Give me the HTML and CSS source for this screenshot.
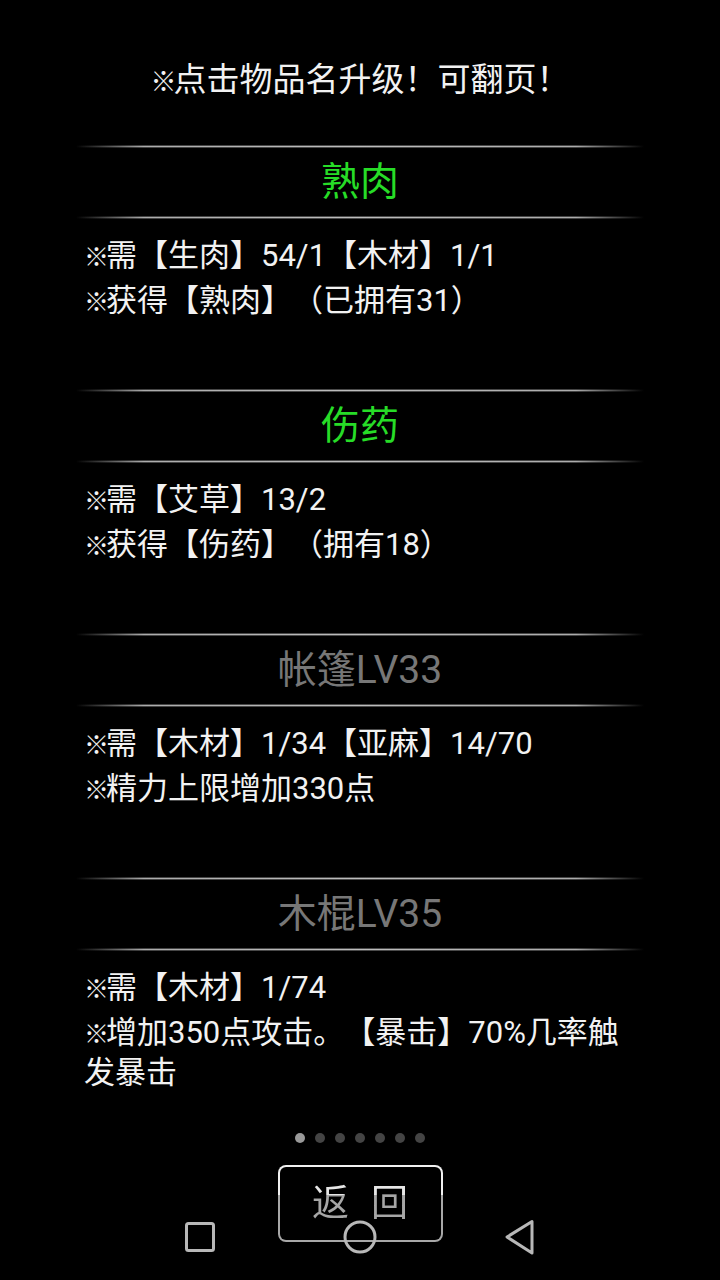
FILE: index.html
```html
<!DOCTYPE html>
<html lang="zh">
<head>
<meta charset="utf-8">
<title>升级</title>
<link rel="stylesheet" href="styles.css">
</head>
<body>
<div class="page">
  <div class="header"><span class="mark">※</span>点击物品名升级！可翻页！</div>

  <section class="item">
    <div class="sep"></div>
    <div class="title green">熟肉</div>
    <div class="sep"></div>
    <div class="desc">
      <p><span class="mark">※</span>需【生肉】54/1【木材】1/1</p>
      <p><span class="mark">※</span>获得【熟肉】（已拥有31）</p>
    </div>
  </section>

  <section class="item">
    <div class="sep"></div>
    <div class="title green">伤药</div>
    <div class="sep"></div>
    <div class="desc">
      <p><span class="mark">※</span>需【艾草】13/2</p>
      <p><span class="mark">※</span>获得【伤药】（拥有18）</p>
    </div>
  </section>

  <section class="item">
    <div class="sep"></div>
    <div class="title gray">帐篷LV33</div>
    <div class="sep"></div>
    <div class="desc">
      <p><span class="mark">※</span>需【木材】1/34【亚麻】14/70</p>
      <p><span class="mark">※</span>精力上限增加330点</p>
    </div>
  </section>

  <section class="item last">
    <div class="sep"></div>
    <div class="title gray">木棍LV35</div>
    <div class="sep"></div>
    <div class="desc">
      <p><span class="mark">※</span>需【木材】1/74</p>
      <p><span class="mark">※</span>增加350点攻击。【暴击】70%几率触发暴击</p>
    </div>
  </section>

  <div class="dots">
    <span class="dot on"></span><span class="dot"></span><span class="dot"></span><span class="dot"></span><span class="dot"></span><span class="dot"></span><span class="dot"></span>
  </div>

  <div class="btn-row">
    <div class="btn"><span class="btn-text">返 回</span></div>
  </div>

  <nav class="navbar">
    <svg class="nav-icon" width="40" height="40" viewBox="0 0 40 40"><rect x="6.5" y="5.5" width="27" height="27" rx="2" fill="none" stroke="#b8b8b8" stroke-width="3"/></svg>
    <svg class="nav-icon" width="40" height="40" viewBox="0 0 40 40"><circle cx="20" cy="19" r="15" fill="none" stroke="#b8b8b8" stroke-width="3"/></svg>
    <svg class="nav-icon" width="40" height="40" viewBox="0 0 40 40"><path d="M32 3.5 L32 35 L7 19 Z" fill="none" stroke="#b8b8b8" stroke-width="3" stroke-linejoin="round"/></svg>
  </nav>
</div>
</body>
</html>
```

FILE: styles.css
```css
html, body {
  margin: 0;
  padding: 0;
  background: #000;
}

.page {
  position: relative;
  width: 720px;
  height: 1280px;
  overflow: hidden;
  background: #000;
  color: #f2f2f2;
  font-family: Roboto, "Noto Sans CJK SC", sans-serif;
  text-spacing-trim: space-all;
}

.mark {
  font-family: "Noto Sans CJK SC", sans-serif;
  font-size: 25px;
  letter-spacing: -3px;
  line-height: 1;
}

.header {
  padding-top: 57px;
  height: 46px;
  line-height: 46px;
  font-size: 33px;
  text-align: center;
  margin-bottom: 42px;
}

.header .mark {
  font-size: 26px;
  letter-spacing: -3px;
}

.item {
  height: 244px;
}

.item.last {
  height: auto;
}

.sep {
  height: 3px;
  margin: 0 76px;
  background: linear-gradient(to right, rgba(190,190,190,0) 0%, rgba(190,190,190,0.9) 12%, #bdbdbd 50%, rgba(190,190,190,0.9) 88%, rgba(190,190,190,0) 100%);
  -webkit-mask-image: linear-gradient(to bottom, rgba(0,0,0,0.4) 0, rgba(0,0,0,0.4) 1px, #000 1px, #000 2px, rgba(0,0,0,0.4) 2px);
  mask-image: linear-gradient(to bottom, rgba(0,0,0,0.4) 0, rgba(0,0,0,0.4) 1px, #000 1px, #000 2px, rgba(0,0,0,0.4) 2px);
}

.title {
  height: 68px;
  line-height: 68px;
  font-size: 39px;
  text-align: center;
}

.title.green {
  color: #27dc27;
}

.title.gray {
  color: #777;
}

.desc {
  padding: 17px 84px 0 84px;
  font-size: 31px;
  line-height: 40px;
}

.desc p {
  margin: 0;
}

.desc p + p {
  margin-top: 5px;
}

.dots {
  display: flex;
  justify-content: center;
  gap: 10px;
  margin-top: 40px;
  height: 10px;
}

.dot {
  width: 10px;
  height: 10px;
  border-radius: 50%;
  background: #444;
}

.dot.on {
  background: #999;
}

.btn-row {
  display: flex;
  justify-content: center;
  margin-top: 22px;
}

.btn {
  width: 161px;
  height: 73px;
  border: 2px solid transparent;
  border-radius: 8px;
  background:
    linear-gradient(#000, #000) padding-box,
    linear-gradient(to bottom, #f0f0f0 0, #f0f0f0 39%, #a8a8a8 39%, #a8a8a8 100%) border-box;
  display: flex;
}

.btn-text {
  display: block;
  width: 100%;
  height: 73px;
  line-height: 73px;
  text-align: center;
  font-size: 37px;
  word-spacing: 13px;
  color: transparent;
  background: linear-gradient(to bottom, #e6e6e6 0, #e6e6e6 38%, #a6a6a6 38%, #a6a6a6 100%);
  -webkit-background-clip: text;
  background-clip: text;
}

.navbar {
  position: absolute;
  left: 0;
  right: 0;
  bottom: 0;
  height: 84px;
  display: flex;
  justify-content: center;
  align-items: center;
  gap: 120px;
}

.nav-icon {
  display: block;
}
```
